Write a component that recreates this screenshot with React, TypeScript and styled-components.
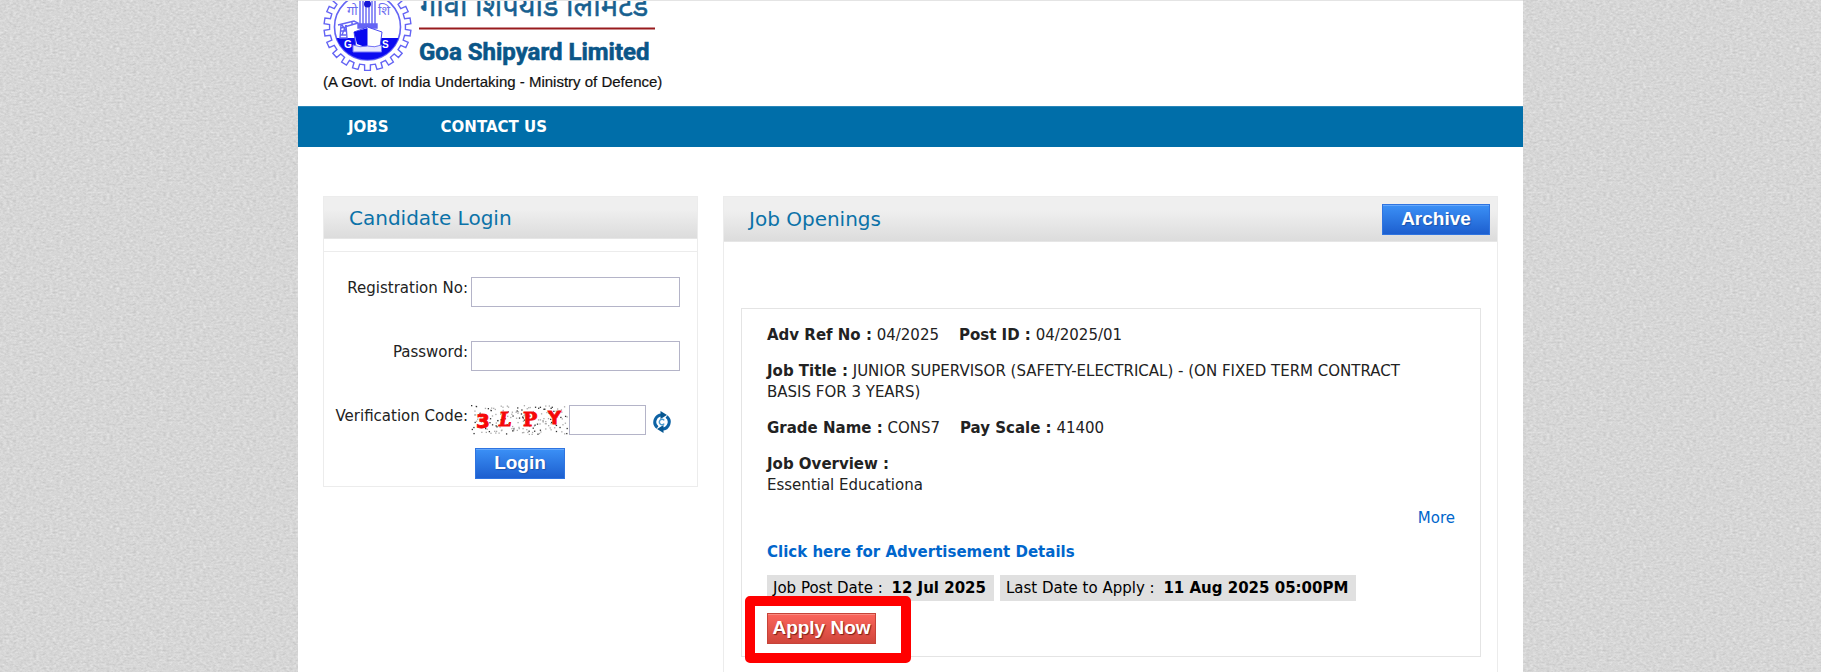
import React from "react";
import styled, { createGlobalStyle } from "styled-components";

const weave =
  "data:image/svg+xml," +
  encodeURIComponent(
    `<svg xmlns="http://www.w3.org/2000/svg" width="240" height="240"><filter id="n" x="0" y="0" width="100%" height="100%" color-interpolation-filters="sRGB"><feTurbulence type="fractalNoise" baseFrequency="0.3 0.5" numOctaves="2" seed="4" stitchTiles="stitch"/><feColorMatrix values="0.14 0.08 0 0 0.73 0.14 0.08 0 0 0.73 0.14 0.08 0 0 0.73 0 0 0 0 1"/></filter><rect width="240" height="240" filter="url(#n)"/></svg>`
  );

const GlobalStyle = createGlobalStyle`
  * { box-sizing: border-box; }
  body {
    margin: 0;
    background: #d7d7d7 url("${weave}");
    color: #222;
    font: 15px/21px "DejaVu Sans", Verdana, sans-serif;
  }
  a { color: #0066cc; text-decoration: none; }
`;

const Page = styled.div`
  display: flex;
  flex-direction: column;
  max-width: 1225px;
  min-height: 100vh;
  margin: 0 auto;
  background: #fff;
  border-top: 1px solid #e4e4e4;
`;

const Header = styled.header`
  padding: 0 24px 12px;
`;

const LogoArt = styled.svg`
  display: block;
  width: 348px;
  height: 93px;
`;

const Nav = styled.nav`
  display: flex;
  gap: 52px;
  height: 41px;
  padding: 0 50px;
  align-items: center;
  background: #006ea9;
  border-top: 1px solid #2a86b8;
`;

const NavLink = styled.a`
  color: #fff;
  font-weight: bold;
`;

const Main = styled.main`
  flex: 1;
  display: flex;
  gap: 25px;
  padding: 49px 25px 0;
`;

const Panel = styled.section<{ $open?: boolean }>`
  flex: ${(p) => (p.$open ? "1" : "0 0 375px")};
  align-self: ${(p) => (p.$open ? "stretch" : "flex-start")};
  min-width: 0;
  border: 1px solid #ececec;
  border-bottom-width: ${(p) => (p.$open ? "0" : "1px")};
`;

const PanelHead = styled.div<{ $tall?: boolean }>`
  display: flex;
  justify-content: space-between;
  align-items: center;
  height: ${(p) => (p.$tall ? "45px" : "42px")};
  padding: 0 7px 0 25px;
  background: linear-gradient(#efefef 30%, #dcdcdc);
  border-bottom: 1px solid #e6e6e6;
`;

const PanelTitle = styled.h2`
  margin: 0;
  color: #0b72a8;
  font-size: 20px;
  line-height: 40px;
  font-weight: normal;
`;

const Button = styled.button<{ $tone?: "red"; $width: number }>`
  width: ${(p) => p.$width}px;
  height: 31px;
  padding: 0 0 2px;
  border: 1px solid ${(p) => (p.$tone ? "#c64338" : "#2f74e0")};
  background: ${(p) =>
    p.$tone ? "linear-gradient(#fb655c, #d1463b)" : "linear-gradient(#3b90f6, #1d5fcf)"};
  box-shadow: inset 0 1px 0 ${(p) => (p.$tone ? "#f98a80" : "#65a8fb")};
  color: #fff;
  font: bold 19px/27px "Liberation Sans", Arial, sans-serif;
  text-shadow: 1px 1px 1px ${(p) => (p.$tone ? "#7a2018" : "#1b55ad")};
  white-space: nowrap;
  cursor: pointer;
`;

const LoginForm = styled.form`
  display: grid;
  grid-template-columns: 144px 1fr;
  gap: 34px 3px;
  margin-top: 12px;
  padding: 25px 17px 7px 0;
  border-top: 1px solid #ececec;
`;

const Label = styled.label`
  padding-top: 1px;
  text-align: right;
  white-space: nowrap;
`;

const TextBox = styled.input<{ $short?: boolean }>`
  width: ${(p) => (p.$short ? "77px" : "100%")};
  height: 30px;
  padding: 2px 6px;
  border: 1px solid #b4b4c8;
  background: #fff;
  font: inherit;
`;

const CodeRow = styled.div`
  display: flex;
  align-items: center;
`;

const IconButton = styled.button`
  width: 18px;
  height: 22px;
  margin: 4px 0 0 7px;
  padding: 0;
  border: 0;
  background: none;
  cursor: pointer;
`;

const Submit = styled.div`
  grid-column: 2;
  margin-top: -21px;
  padding-left: 4px;
`;

const JobCard = styled.article`
  margin: 66px 16px 0 17px;
  padding: 16px 25px 12px;
  border: 1px solid #e4e4e4;
`;

const Line = styled.p`
  margin: 0 0 15px;
  padding-right: 20px;
`;

const Field = styled.span`
  margin-right: 20px;
`;

const More = styled.p`
  margin: -3px 0 13px;
  text-align: right;
`;

const Dates = styled.div`
  display: flex;
  gap: 6px;
  margin: 12px 0;
`;

const DateTag = styled.span`
  padding: 3px 8px 2px 6px;
  background: #e0e0e0;
  color: #000;
  white-space: nowrap;

  b {
    margin-left: 4px;
  }
`;

const Marked = styled.div`
  position: relative;
  width: fit-content;
  line-height: 0;
`;

const Marker = styled.span`
  position: absolute;
  inset: -17px -35px -19px -22px;
  border: 10px solid #ff0000;
  border-radius: 5px;
  pointer-events: none;
`;

function gearPath(cx: number, cy: number, teeth: number) {
  const pts: string[] = [];
  const step = (Math.PI * 2) / teeth;
  for (let i = 0; i < teeth; i++) {
    const a = i * step + Math.PI / 2;
    [
      [-0.27, 38],
      [-0.23, 43.5],
      [0.23, 43.5],
      [0.27, 38],
    ].forEach(([o, r]) =>
      pts.push(`${(cx + r * Math.cos(a + o * step)).toFixed(2)} ${(cy + r * Math.sin(a + o * step)).toFixed(2)}`)
    );
  }
  return `M${pts.join("L")}Z`;
}

function Logo() {
  return (
    <LogoArt viewBox="0 0 348 93" role="img" aria-label="Goa Shipyard Limited">
      <g fill="none" stroke="#6464f4" strokeWidth="1.4">
        <path d={gearPath(45.5, 26, 22)} />
        <circle cx="45.5" cy="26" r="33" strokeWidth="1.6" />
        <path d="M14.5 37h62a33 33 0 0 1-62 0z" fill="#0a0af0" stroke="none" />
        <path d="M38 23V0M41 23V0M44 23V0M47 23V0M50 23V0M53 23V0" />
        <path d="M36 23h19v4H36z" fill="#6464f4" />
        <path d="M16 24l16-4 4 2-17 5M19 24l-1 13h7l-1-13M19 30h5M18 34h6M20 24l4 6M24 24l-4 10M30 21v3" />
      </g>
      <circle cx="45.5" cy="3" r="3.5" fill="#1515d8" />
      <path d="M32 31l13.5-5L60 31l-2 15H34z" fill="#fff" stroke="#4a4af0" strokeWidth="1" />
      <path d="M32 31l13.5-4v20L35 43z" fill="#0808ee" />
      <path d="M31 44q7 3 14.500 1 7 2 14-1v7H31z" fill="#e7e7ff" stroke="#7777f5" strokeWidth="1" />
      <g fontFamily="Noto Sans, sans-serif" fontSize="13" fill="#6b6bf0">
        <text x="25" y="14">गो</text>
        <text x="56" y="14">शि</text>
      </g>
      <g fontFamily="Liberation Sans, Arial, sans-serif" fontSize="10" fontWeight="bold" fill="#fff">
        <text x="22" y="47">G</text>
        <text x="60" y="47">S</text>
      </g>
      <text x="98" y="15" fontFamily="Noto Sans Devanagari, Noto Sans, sans-serif" fontSize="29" fill="#17608f" stroke="#17608f" strokeWidth="0.5">
        गोवा शिपयार्ड लिमिटेड
      </text>
      <path d="M97 26.500h236v2H97z" fill="#981b1e" />
      <text x="97" y="59" fontFamily="Roboto, Liberation Sans, sans-serif" fontWeight="bold" fontSize="24" fill="#0a5688" stroke="#0a5688" strokeWidth="0.6">
        Goa Shipyard Limited
      </text>
      <text x="1" y="86" fontFamily="Liberation Sans, Arial, sans-serif" fontSize="15" fill="#111" stroke="#111" strokeWidth="0.2">
        (A Govt. of India Undertaking - Ministry of Defence)
      </text>
    </LogoArt>
  );
}

const specks = Array.from({ length: 190 }, (_, i) => ({
  x: (i * 61.803 + ((i * i) % 17)) % 96,
  y: (i * 17.31 + ((i * i * 3) % 11)) % 29,
  dark: i % 3 === 0,
}));

function Captcha() {
  return (
    <svg width="98" height="30" role="img" aria-label="Verification code image">
      {specks.map((s, i) => (
        <rect key={i} x={s.x} y={s.y} width="1.300" height="1.300" fill={s.dark ? "#333" : "#aaa"} />
      ))}
      <g fill="#f60808" stroke="#f60808" strokeWidth="0.8" fontWeight="bold" fontFamily="DejaVu Sans, sans-serif">
        <text x="5" y="23" fontSize="20">3</text>
        <text x="28" y="21" fontSize="18" fontStyle="italic" fontFamily="DejaVu Serif, serif">L</text>
        <text x="52" y="21" fontSize="19" fontFamily="DejaVu Serif, serif">P</text>
        <text x="77" y="19" fontSize="18">Y</text>
      </g>
    </svg>
  );
}

function RefreshIcon() {
  return (
    <svg width="18" height="22" viewBox="0 0 18 22">
      <g fill="none" stroke="#0d62a4" strokeWidth="3">
        <path d="M4.500 16.500A7 7 0 0 1 9 4" />
        <path d="M13.500 5.500A7 7 0 0 1 9 18" />
      </g>
      <path d="M7.500 0L14 4 7.500 8zM10.500 14L4 18l6.500 4z" fill="#075791" />
      <path d="M11.200 9.400a2.700 2.700 0 1 0 0 3.200" fill="none" stroke="#4a9bd0" strokeWidth="1.500" />
    </svg>
  );
}

export default function App() {
  return (
    <>
      <GlobalStyle />
      <Page>
        <Header>
          <Logo />
        </Header>
        <Nav>
          <NavLink href="#jobs">JOBS</NavLink>
          <NavLink href="#contact">CONTACT US</NavLink>
        </Nav>
        <Main>
          <Panel>
            <PanelHead>
              <PanelTitle>Candidate Login</PanelTitle>
            </PanelHead>
            <LoginForm onSubmit={(e) => e.preventDefault()}>
              <Label htmlFor="reg">Registration No:</Label>
              <TextBox id="reg" type="text" />
              <Label htmlFor="pass">Password:</Label>
              <TextBox id="pass" type="password" />
              <Label htmlFor="code">Verification Code:</Label>
              <CodeRow>
                <Captcha />
                <TextBox id="code" type="text" $short />
                <IconButton type="button" aria-label="Refresh code">
                  <RefreshIcon />
                </IconButton>
              </CodeRow>
              <Submit>
                <Button type="submit" $width={90}>Login</Button>
              </Submit>
            </LoginForm>
          </Panel>
          <Panel $open>
            <PanelHead $tall>
              <PanelTitle>Job Openings</PanelTitle>
              <Button type="button" $width={108}>Archive</Button>
            </PanelHead>
            <JobCard>
              <Line>
                <Field><b>Adv Ref No :</b> 04/2025</Field>
                <Field><b>Post ID :</b> 04/2025/01</Field>
              </Line>
              <Line>
                <b>Job Title :</b> JUNIOR SUPERVISOR (SAFETY-ELECTRICAL) - (ON FIXED TERM CONTRACT BASIS FOR 3 YEARS)
              </Line>
              <Line>
                <Field><b>Grade Name :</b> CONS7</Field>
                <Field><b>Pay Scale :</b> 41400</Field>
              </Line>
              <Line>
                <b>Job Overview :</b>
                <br />
                Essential Educationa
              </Line>
              <More><a href="#more">More</a></More>
              <a href="#advertisement"><b>Click here for Advertisement Details</b></a>
              <Dates>
                <DateTag>Job Post Date : <b>12 Jul 2025</b></DateTag>
                <DateTag>Last Date to Apply : <b>11 Aug 2025 05:00PM</b></DateTag>
              </Dates>
              <Marked>
                <Button type="button" $tone="red" $width={109}>Apply Now</Button>
                <Marker />
              </Marked>
            </JobCard>
          </Panel>
        </Main>
      </Page>
    </>
  );
}
